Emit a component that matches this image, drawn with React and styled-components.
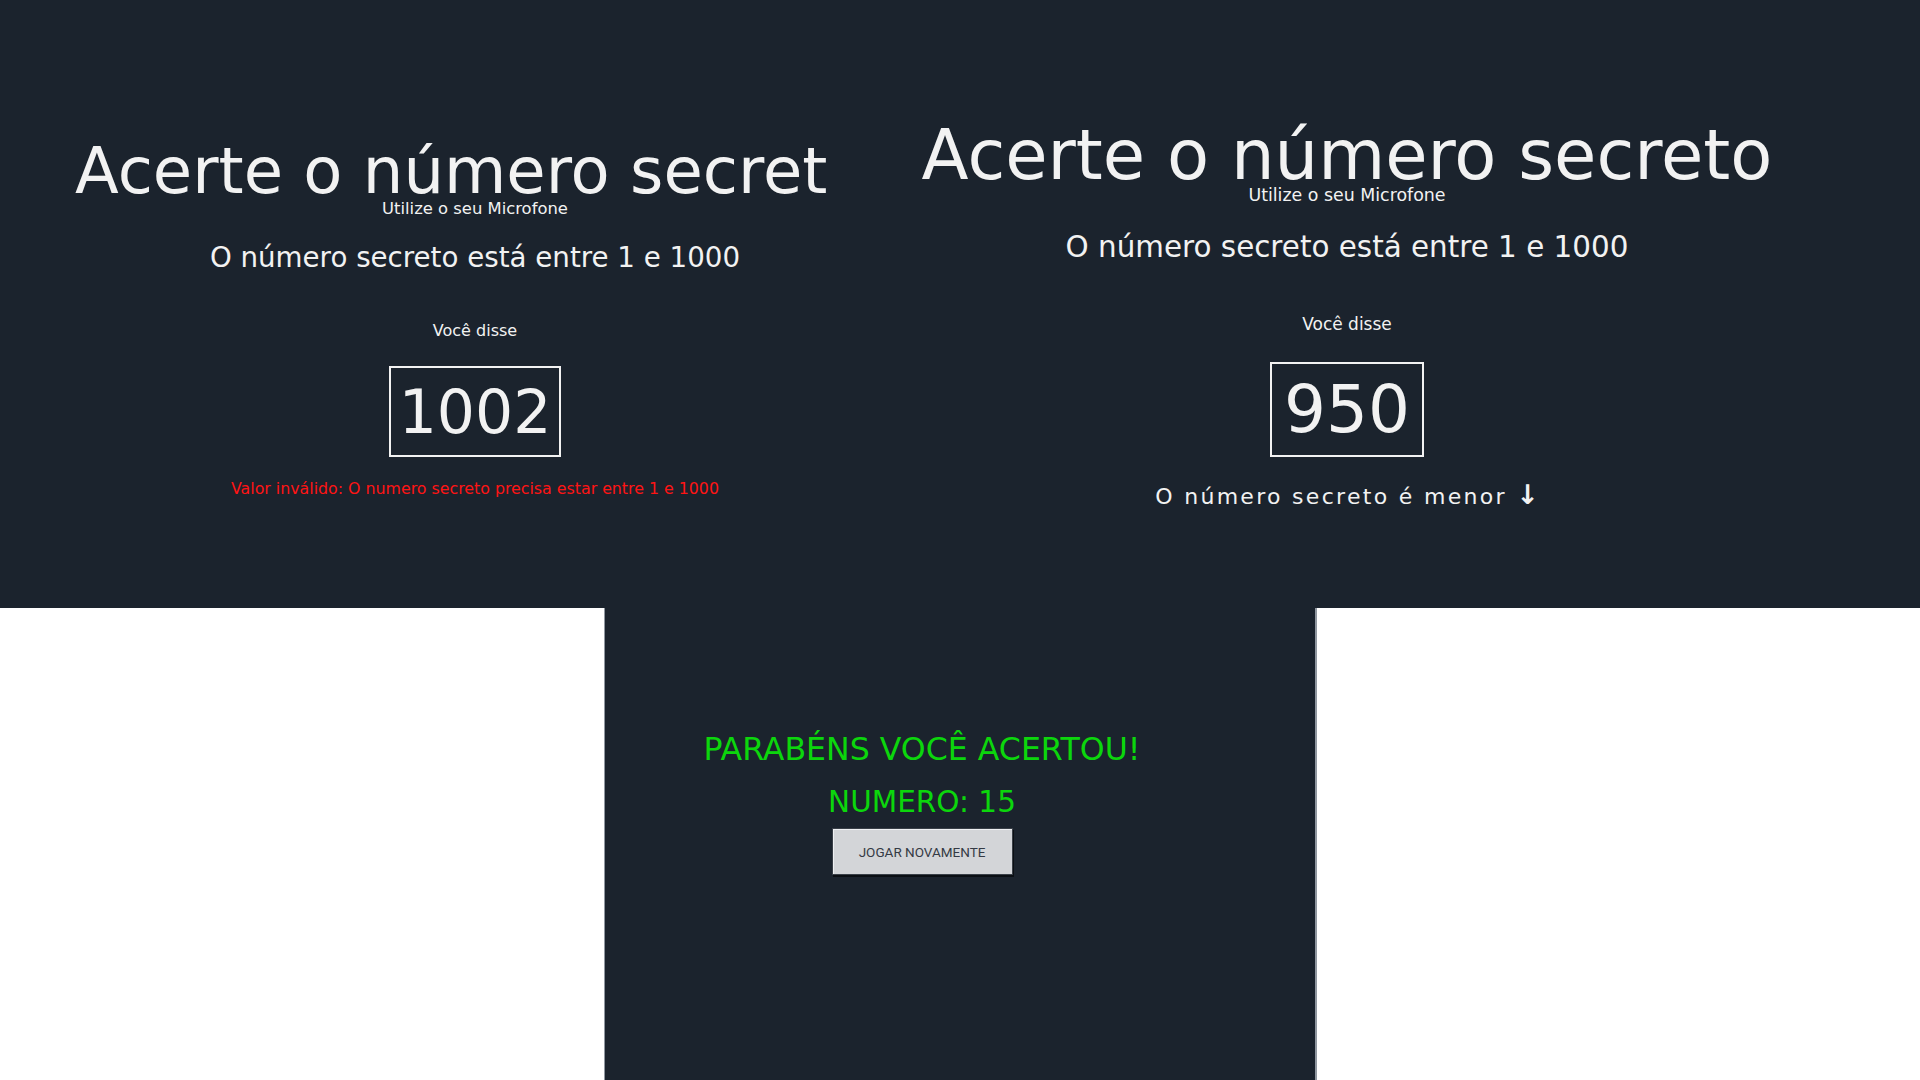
import React from "react";
import styled, { createGlobalStyle } from "styled-components";

const GlobalStyle = createGlobalStyle`
  html, body {
    margin: 0;
    padding: 0;
    background: #ffffff;
  }
  body {
    font-family: "DejaVu Sans", "Liberation Sans", sans-serif;
  }
`;

const Top = styled.section`
  display: flex;
  height: 608px;
  background: #1b232d;
  color: #f2f2f2;
`;

const Screen = styled.div`
  display: flex;
  flex-direction: column;
  align-items: center;
  box-sizing: border-box;
  flex: none;
  min-width: 0;
  width: ${(p) => p.$width}px;
  padding-top: ${(p) => p.$top}px;
  padding-right: ${(p) => p.$right || 0}px;
`;

const TitleClip = styled.div`
  align-self: flex-start;
  margin-left: 75px;
  width: 751px;
  overflow: hidden;
`;

const Title = styled.h1`
  margin: 0;
  flex: none;
  font-weight: 400;
  white-space: nowrap;
  font-size: ${(p) => p.$size}px;
  line-height: ${(p) => p.$lh}px;
`;

const Caption = styled.p`
  margin: ${(p) => p.$mt || 0}px 0 0;
  font-size: ${(p) => p.$size}px;
  line-height: 20px;
  white-space: nowrap;
`;

const Range = styled.h2`
  margin: ${(p) => p.$mt}px 0 0;
  font-weight: 400;
  font-size: ${(p) => p.$size}px;
  line-height: ${(p) => p.$lh}px;
  white-space: nowrap;
`;

const NumberBox = styled.div`
  margin-top: ${(p) => p.$mt}px;
  box-sizing: border-box;
  width: ${(p) => p.$w}px;
  height: ${(p) => p.$h}px;
  border: 2px solid #f2f2f2;
  display: flex;
  align-items: center;
  justify-content: center;
  font-size: ${(p) => p.$size}px;
  line-height: 1;
`;

const ErrorText = styled.p`
  margin: 22px 0 0;
  color: #ff1414;
  font-size: 15.8px;
  line-height: 20px;
  white-space: nowrap;
`;

const Tip = styled.p`
  margin: 25px 0 0;
  font-size: 22px;
  line-height: 26px;
  letter-spacing: 2.3px;
  white-space: nowrap;
`;

const Arrow = styled.span`
  font-size: 27px;
  font-weight: 700;
  letter-spacing: 0;
  line-height: 26px;
`;

const Bottom = styled.section`
  display: flex;
  justify-content: center;
  height: 472px;
  background: #ffffff;
`;

const Panel = styled.div`
  width: 713px;
  box-sizing: border-box;
  background: #1b232d;
  border-left: 1px solid #9097a0;
  border-right: 2px solid #9097a0;
  display: flex;
  flex-direction: column;
  align-items: center;
  padding: 123px 75px 0 0;
`;

const Win = styled.p`
  margin: ${(p) => p.$mt || 0}px 0 0;
  color: #0cd60c;
  font-size: ${(p) => p.$size}px;
  line-height: 36px;
  white-space: nowrap;
`;

const Button = styled.button`
  margin-top: 8px;
  width: 181px;
  height: 47px;
  box-sizing: border-box;
  background: #d3d5d8;
  border: 1px solid #3a4048;
  box-shadow: inset 1px 1px 0 #eef0f2, 1px 2px 0 #0b0f14;
  font-family: Roboto, "Liberation Sans", sans-serif;
  font-size: 13.5px;
  color: #343a44;
  cursor: pointer;
`;

export default function App() {
  return (
    <>
      <GlobalStyle />
      <Top>
        <Screen $width={950} $top={143}>
          <TitleClip>
            <Title $size={64} $lh={56}>Acerte o número secreto</Title>
          </TitleClip>
          <Caption $size={16.4}>Utilize o seu Microfone</Caption>
          <Range $mt={23} $size={27.7} $lh={32}>
            O número secreto está entre 1 e 1000
          </Range>
          <Caption $mt={47} $size={16}>Você disse</Caption>
          <NumberBox $mt={25} $w={172} $h={91} $size={60}>1002</NumberBox>
          <ErrorText>
            Valor inválido: O numero secreto precisa estar entre 1 e 1000
          </ErrorText>
        </Screen>
        <Screen $width={970} $top={125} $right={176}>
          <Title $size={68.8} $lh={60}>Acerte o número secreto</Title>
          <Caption $size={17.4}>Utilize o seu Microfone</Caption>
          <Range $mt={25} $size={29.4} $lh={34}>
            O número secreto está entre 1 e 1000
          </Range>
          <Caption $mt={50} $size={17}>Você disse</Caption>
          <NumberBox $mt={28} $w={154} $h={95} $size={66}>950</NumberBox>
          <Tip>
            O número secreto é menor <Arrow>↓</Arrow>
          </Tip>
        </Screen>
      </Top>
      <Bottom>
        <Panel>
          <Win $size={31.6}>PARABÉNS VOCÊ ACERTOU!</Win>
          <Win $mt={17} $size={29.5}>NUMERO: 15</Win>
          <Button>JOGAR NOVAMENTE</Button>
        </Panel>
      </Bottom>
    </>
  );
}
